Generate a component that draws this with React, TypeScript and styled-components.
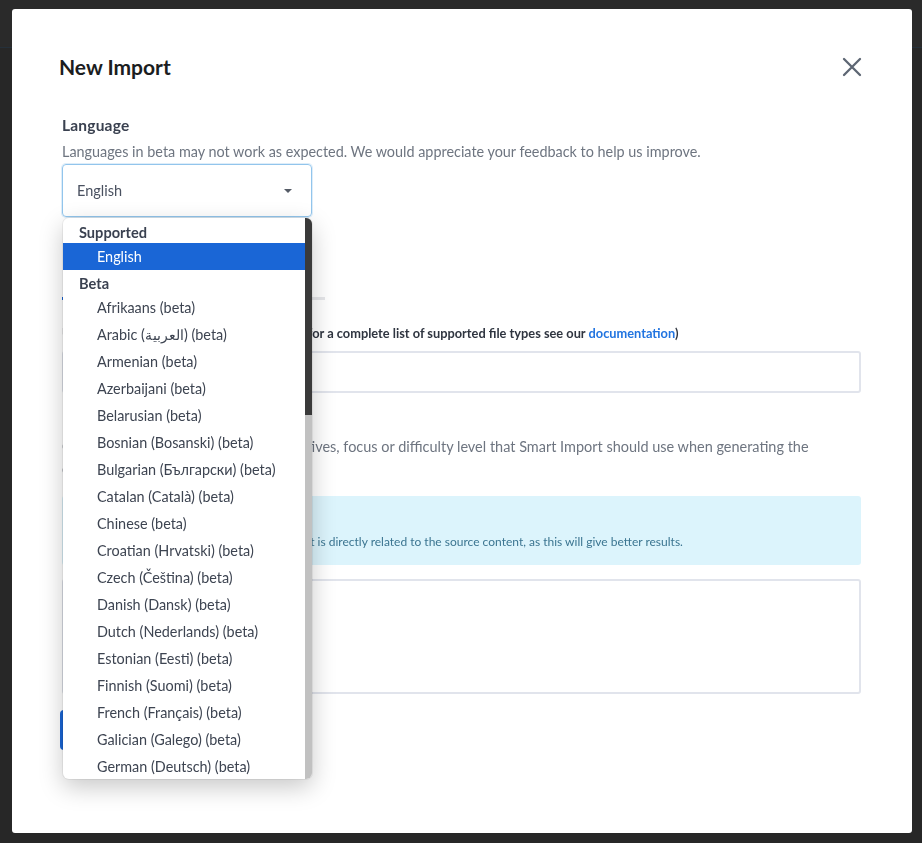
import React from "react";
import styled, { createGlobalStyle } from "styled-components";

const GlobalStyle = createGlobalStyle`
  html, body { margin: 0; padding: 0; }
  body {
    background: #272727;
    font-family: Lato, "Noto Sans", "Noto Sans CJK JP", sans-serif;
  }
  * { box-sizing: border-box; }
`;

const Shell = styled.div`
  min-height: 100vh;
  background: #272727;
`;

const NavBar = styled.div`
  height: 48px;
  background: #2a2a2a;
  border-bottom: 1px solid #25303a;
`;

const Overlay = styled.div`
  position: fixed;
  inset: 0;
  padding: 9px 10px 10px 12px;
  display: flex;
`;

const Modal = styled.div`
  flex: 1;
  background: #ffffff;
  border-radius: 3px;
  display: flex;
  flex-direction: column;
`;

const Header = styled.div`
  display: flex;
  align-items: center;
  justify-content: space-between;
  padding: 44px 50px 0 47px;
`;

const Title = styled.h2`
  margin: 0;
  font-size: 21px;
  line-height: 28px;
  font-weight: 700;
  color: #1b1d21;
`;

const CloseButton = styled.button`
  border: 0;
  background: none;
  padding: 0;
  width: 20px;
  height: 20px;
  display: flex;
  color: #5d6673;
  cursor: pointer;
`;

const Body = styled.div`
  padding: 34px 51px 0 50px;
  display: flex;
  flex-direction: column;
`;

const FieldLabel = styled.div`
  font-size: 15.5px;
  letter-spacing: 0.2px;
  line-height: 20px;
  font-weight: 700;
  color: #3a4150;
`;

const Helper = styled.div`
  margin-top: 7px;
  font-size: 14.4px;
  line-height: 20px;
  color: #6e7580;
`;

const SelectWrap = styled.div`
  position: relative;
  margin-top: 2px;
  width: 250px;
`;

const SelectBox = styled.div`
  height: 53px;
  border: 1px solid #92c5ec;
  box-shadow: 0 0 0 1px rgba(146, 197, 236, 0.3);
  border-radius: 4px;
  padding: 0 19px 0 14px;
  display: flex;
  align-items: center;
  justify-content: space-between;
  font-size: 14.5px;
  color: #4a5160;
`;

const Caret = styled.span`
  width: 0;
  height: 0;
  border-left: 4px solid transparent;
  border-right: 4px solid transparent;
  border-top: 4px solid #555b66;
`;

const Menu = styled.div`
  position: absolute;
  top: calc(100% + 1px);
  left: 1px;
  width: 249px;
  height: 561px;
  display: flex;
  background: #ffffff;
  border-radius: 6px;
  box-shadow: 0 8px 24px rgba(0, 0, 0, 0.22), 0 0 0 1px rgba(0, 0, 0, 0.06);
  overflow: hidden;
  z-index: 10;
`;

const OptionList = styled.div`
  flex: 1;
  min-width: 0;
  overflow: hidden;
`;

const ScrollTrack = styled.div`
  width: 7px;
  flex-shrink: 0;
  background: #c1c1c1;
  display: flex;
  flex-direction: column;
`;

const ScrollThumb = styled.div`
  height: 197px;
  background: #3a3a3a;
`;

const GroupLabel = styled.div<{ $first?: boolean }>`
  height: ${(p) => (p.$first ? 25 : 24)}px;
  padding: ${(p) => (p.$first ? 4 : 3)}px 16px 0;
  line-height: 21px;
  font-size: 14.6px;
  font-weight: 700;
  color: #3a4150;
`;

const Option = styled.div<{ $selected?: boolean }>`
  height: 27px;
  line-height: 27px;
  padding-left: 34px;
  font-size: 14.4px;
  white-space: nowrap;
  color: ${(p) => (p.$selected ? "#ffffff" : "#3d4451")};
  background: ${(p) => (p.$selected ? "#1a66d6" : "transparent")};
`;

const TabList = styled.div`
  margin-top: 40px;
  align-self: flex-start;
  display: flex;
  border-bottom: 3px solid #e6e7ea;
`;

const Tab = styled.div<{ $active?: boolean }>`
  padding: 10px 27px;
  margin-bottom: -3px;
  font-size: 14px;
  line-height: 20px;
  font-weight: 700;
  color: ${(p) => (p.$active ? "#1a66d6" : "#6e7580")};
  border-bottom: 3px solid ${(p) => (p.$active ? "#1a66d6" : "transparent")};
`;

const FileHint = styled.div`
  margin-top: 24px;
  font-size: 12.8px;
  line-height: 18px;
  font-weight: 700;
  color: #2f3540;
`;

const Link = styled.a`
  color: #2174e0;
  text-decoration: none;
`;

const TextInput = styled.div`
  margin-top: 9px;
  height: 42px;
  border: 2px solid #e1e4ec;
  border-radius: 3px;
`;

const SectionLabel = styled(FieldLabel)`
  margin-top: 20px;
`;

const Description = styled.div`
  margin-top: 3px;
  font-size: 14.48px;
  line-height: 22px;
  color: #6e7580;
`;

const InfoBox = styled.div`
  margin-top: 16px;
  background: #dcf4fc;
  border-radius: 3px;
  padding: 12px 16px 14px;
`;

const InfoTitle = styled.div`
  font-size: 12.5px;
  line-height: 18px;
  font-weight: 700;
  color: #2d6a87;
`;

const InfoText = styled.div`
  margin-top: 7px;
  font-size: 12px;
  line-height: 18px;
  color: #3b7591;
`;

const TextArea = styled.div`
  margin-top: 14px;
  height: 115px;
  border: 2px solid #e1e4ec;
  border-radius: 3px;
`;

const PrimaryButton = styled.button`
  margin-top: 16px;
  margin-left: -2px;
  align-self: flex-start;
  height: 40px;
  padding: 0 24px;
  border: 0;
  border-radius: 4px;
  background: #1a66d6;
  color: #ffffff;
  font-family: inherit;
  font-size: 14px;
  font-weight: 700;
`;

const betaLanguages = [
  "Afrikaans",
  "Arabic (العربية)",
  "Armenian",
  "Azerbaijani",
  "Belarusian",
  "Bosnian (Bosanski)",
  "Bulgarian (Български)",
  "Catalan (Català)",
  "Chinese",
  "Croatian (Hrvatski)",
  "Czech (Čeština)",
  "Danish (Dansk)",
  "Dutch (Nederlands)",
  "Estonian (Eesti)",
  "Finnish (Suomi)",
  "French (Français)",
  "Galician (Galego)",
  "German (Deutsch)",
  "Greek (Ελληνικά)",
  "Hebrew (עברית)",
  "Hindi (हिन्दी)",
  "Hungarian (Magyar)",
  "Icelandic (Íslenska)",
  "Indonesian (Bahasa Indonesia)",
  "Italian (Italiano)",
  "Japanese (日本語)",
  "Kannada",
  "Kazakh",
  "Korean (한국어)",
  "Latvian (Latviešu)",
  "Lithuanian (Lietuvių)",
  "Macedonian",
  "Malay (Bahasa Melayu)",
  "Marathi",
  "Maori",
  "Nepali",
  "Norwegian (Norsk)",
  "Persian",
  "Polish (Polski)",
  "Portuguese (Português)",
  "Romanian (Română)",
  "Russian (Русский)",
  "Serbian (Српски)",
  "Slovak (Slovenčina)",
  "Slovenian (Slovenščina)",
  "Spanish (Español)",
  "Swahili",
  "Swedish (Svenska)",
  "Tagalog",
  "Tamil",
  "Thai",
  "Turkish (Türkçe)",
  "Ukrainian (Українська)",
  "Urdu",
  "Vietnamese (Tiếng Việt)",
  "Welsh (Cymraeg)",
];

export default function App() {
  return (
    <Shell>
      <GlobalStyle />
      <NavBar />
      <Overlay>
        <Modal>
          <Header>
            <Title>New Import</Title>
            <CloseButton aria-label="Close">
              <svg width="20" height="20" viewBox="0 0 20 20" fill="none">
                <path
                  d="M2 2L18 18M18 2L2 18"
                  stroke="currentColor"
                  strokeWidth="2.3"
                  strokeLinecap="round"
                />
              </svg>
            </CloseButton>
          </Header>
          <Body>
            <FieldLabel>Language</FieldLabel>
            <Helper>
              Languages in beta may not work as expected. We would appreciate your feedback to help us improve.
            </Helper>
            <SelectWrap>
              <SelectBox>
                <span>English</span>
                <Caret />
              </SelectBox>
              <Menu>
                <OptionList>
                  <GroupLabel $first>Supported</GroupLabel>
                  <Option $selected>English</Option>
                  <GroupLabel>Beta</GroupLabel>
                  {betaLanguages.map((l) => (
                    <Option key={l}>{l} (beta)</Option>
                  ))}
                </OptionList>
                <ScrollTrack>
                  <ScrollThumb />
                </ScrollTrack>
              </Menu>
            </SelectWrap>

            <TabList>
              <Tab $active>File</Tab>
              <Tab>Text</Tab>
              <Tab>Website</Tab>
            </TabList>

            <FileHint>
              Upload your PDF, Word or Powerpoint file (for a complete list of supported file types see our{" "}
              <Link href="#">documentation</Link>)
            </FileHint>
            <TextInput />

            <SectionLabel>Learning Objectives</SectionLabel>
            <Description>
              Optionally, describe any learning objectives, focus or difficulty level that Smart Import should use when
              generating the questions.
            </Description>

            <InfoBox>
              <InfoTitle>Tip</InfoTitle>
              <InfoText>
                Only add additional context, or guidance that is directly related to the source content, as this will
                give better results.
              </InfoText>
            </InfoBox>
            <TextArea />

            <PrimaryButton>Generate</PrimaryButton>
          </Body>
        </Modal>
      </Overlay>
    </Shell>
  );
}
